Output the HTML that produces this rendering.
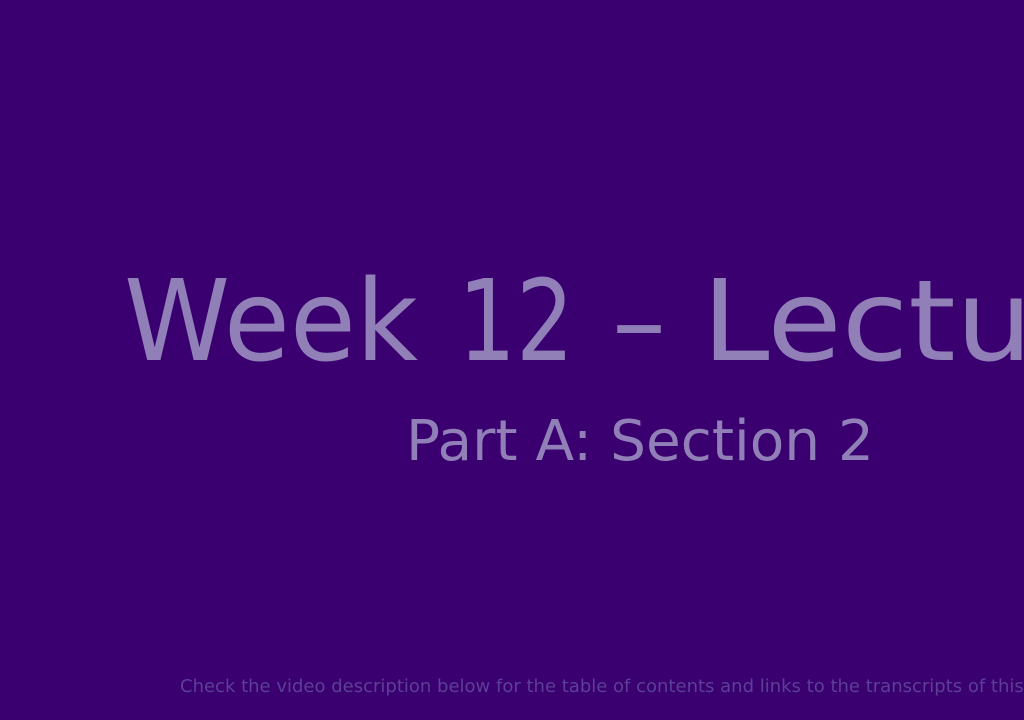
<!DOCTYPE html>
<html><head><meta charset="utf-8"><style>
html,body{margin:0;padding:0;background:#3a0070;width:1024px;height:720px;overflow:hidden}
svg{display:block}
</style></head><body>
<svg width="1024" height="720" xmlns="http://www.w3.org/2000/svg">
<rect width="1024" height="720" fill="#3a0070"/>
<g font-family="DejaVu Sans, sans-serif" font-size="112" fill="#9180b8">
<text x="124" y="360" textLength="294" lengthAdjust="spacingAndGlyphs">Week</text>
<text x="458" y="360" textLength="116" lengthAdjust="spacingAndGlyphs">12</text>
<text x="612" y="360" textLength="54" lengthAdjust="spacingAndGlyphs">–</text>
<text x="702" y="360" textLength="452" lengthAdjust="spacingAndGlyphs">Lecture</text>
</g>
<text x="406" y="460" font-family="DejaVu Sans, sans-serif" font-size="56" fill="#9180b8" textLength="468" lengthAdjust="spacingAndGlyphs">Part A: Section 2</text>
<text x="180" y="692" font-family="DejaVu Sans, sans-serif" font-size="18" fill="#5c3f96">Check the video description below for the table of contents and links to the transcripts of this lecture</text>
</svg>
</body></html>
